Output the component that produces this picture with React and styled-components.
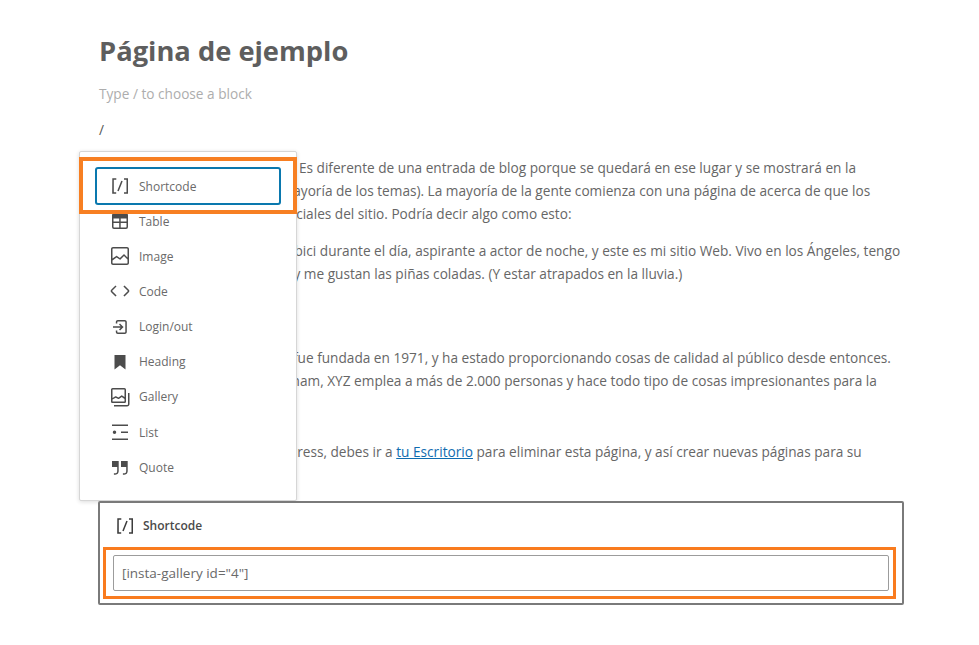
import React from "react";
import styled, { createGlobalStyle } from "styled-components";

const GlobalStyle = createGlobalStyle`
  html, body {
    margin: 0;
    background: #fff;
  }
  body {
    font-family: "Open Sans", "Liberation Sans", sans-serif;
    color: #555;
  }
`;

const Page = styled.div`
  position: relative;
  width: 979px;
  height: 645px;
  box-sizing: border-box;
  padding: 32px 76px 0 99px;
  overflow: hidden;
`;

const Title = styled.h1`
  margin: 0;
  font-size: 27.3px;
  line-height: 38px;
  font-weight: 700;
  color: #5e5e5e;
`;

const Placeholder = styled.div`
  margin-top: 14px;
  font-size: 13.65px;
  line-height: 20px;
  color: #adadad;
`;

const Slash = styled.div`
  margin-top: 15px;
  font-size: 13.65px;
  line-height: 21px;
  color: #555;
`;

const Paragraph = styled.p`
  margin: ${(props) => props.$top || 14}px 0 0;
  font-size: 13.65px;
  line-height: 23.2px;
  color: #666;
  white-space: nowrap;
  a {
    color: #0f6cb0;
  }
`;

const Menu = styled.div`
  position: absolute;
  left: 79px;
  top: 151px;
  width: 218px;
  height: 350px;
  box-sizing: border-box;
  padding: 15px;
  background: #fff;
  border: 1px solid #d6d6d6;
  border-radius: 2px;
  box-shadow: 0 1px 4px rgba(0, 0, 0, 0.14);
`;

const MenuRow = styled.div`
  display: flex;
  align-items: center;
  gap: 7px;
  height: ${(props) => (props.$selected ? "38px" : "35.15px")};
  margin-bottom: ${(props) => (props.$selected ? "-1.4px" : "0")};
  padding-left: 13px;
  border-radius: 3px;
  font-size: 12px;
  color: #6a6a6a;
  box-shadow: ${(props) => (props.$selected ? "inset 0 0 0 2px #0a78ae" : "none")};
  svg {
    flex: none;
    width: 24px;
    height: 24px;
    fill: #4c4c4c;
    fill-rule: evenodd;
  }
`;

const MenuCallout = styled.div`
  position: absolute;
  left: -1px;
  top: 5px;
  width: 218px;
  height: 57px;
  box-sizing: border-box;
  border: 4px solid #f77f22;
`;

const ShortcodeBlock = styled.div`
  position: absolute;
  left: 98px;
  top: 501px;
  width: 806px;
  height: 104px;
  box-sizing: border-box;
  border: 2px solid #7a7a7a;
  border-radius: 2px;
  background: #fff;
`;

const BlockHeader = styled.div`
  display: flex;
  align-items: center;
  gap: 6px;
  height: 44px;
  box-sizing: border-box;
  padding: 1px 0 0 13px;
  font-size: 12px;
  font-weight: 600;
  color: #4a4a4a;
  svg {
    width: 24px;
    height: 24px;
    fill: #3c3c3c;
  }
`;

const InputCallout = styled.div`
  margin: 0 6px 0 3px;
  padding: 5px 4px 5px 7px;
  border: 3px solid #f97b1e;
`;

const ShortcodeInput = styled.div`
  height: 36px;
  box-sizing: border-box;
  display: flex;
  align-items: center;
  padding-left: 8px;
  border: 1px solid #9c9c9c;
  border-radius: 2px;
  font-size: 13.5px;
  color: #6a6a6a;
`;

const ShortcodeIcon = () => (
  <svg viewBox="0 0 24 24">
    <path d="M16 4.2v1.5h2.5v12.5H16v1.5h4V4.2h-4zM4.2 19.8h4v-1.5H5.8V5.8h2.5V4.2h-4l-.1 15.6zm5.1-3.1l1.4.6 4-10-1.4-.6-4 10z" />
  </svg>
);

const menuItems = [
  {
    label: "Table",
    icon: "M6 4h12a2 2 0 012 2v12a2 2 0 01-2 2H6a2 2 0 01-2-2V6a2 2 0 012-2zm-.5 5.500v3h5.700v-3H5.500zm0 4.500V18c0 .3.2.5.5.5h5.200V14H5.500zm7.200 4.500H18c.3 0 .5-.2.5-.5v-4h-5.800v4.500zm5.800-6v-3h-5.800v3h5.800z",
  },
  {
    label: "Image",
    icon: "M19 3H5c-1.100 0-2 .9-2 2v14c0 1.100.9 2 2 2h14c1.100 0 2-.9 2-2V5c0-1.100-.9-2-2-2zM5 4.500h14c.3 0 .5.2.5.5v8.400l-3-2.900c-.3-.3-.8-.3-1 0L11.900 14 9 12c-.3-.2-.6-.2-.8 0l-3.700 2.600V5c0-.3.2-.5.5-.5zm14 15H5c-.3 0-.5-.2-.5-.5v-2.400l4.100-3 3 1.900c.3.2.7.2.9-.1L16 12l3.500 3.400V19c0 .3-.2.5-.5.5z",
  },
  {
    label: "Code",
    icon: "M20.800 10.700l-4.300-4.300-1.100 1.100 4.300 4.300c.1.1.1.3 0 .4l-4.300 4.300 1.100 1.100 4.300-4.300c.7-.8.7-1.900 0-2.600zM4.200 11.800l4.300-4.300-1-1-4.300 4.300c-.7.7-.7 1.800 0 2.500l4.300 4.300 1.100-1.100-4.300-4.300c-.2-.1-.2-.3-.1-.4z",
  },
  {
    label: "Login/out",
    icon: "M11 14.500l1.100 1.100 3-3 .5-.5-.6-.6-3-3-1 1 1.700 1.700H5v1.500h7.700L11 14.500zM16.800 5h-7c-1.100 0-2 .9-2 2v1.500h1.500V7c0-.3.2-.5.5-.5h7c.3 0 .5.2.5.5v10c0 .3-.2.5-.5.5h-7c-.3 0-.5-.2-.5-.5v-1.500H7.800V17c0 1.100.9 2 2 2h7c1.100 0 2-.9 2-2V7c0-1.100-.9-2-2-2z",
  },
  { label: "Heading", icon: "M6.500 5h11v14.500L12 15.300l-5.500 4.200V5z" },
  {
    label: "Gallery",
    icon: "M16.375 4.500H4.625a.125.125 0 0 0-.125.125v8.254l2.859-1.540a.75.75 0 0 1 .68-.016l2.384 1.142 2.890-2.074a.75.75 0 0 1 .874 0l2.313 1.660V4.625a.125.125 0 0 0-.125-.125Zm.125 9.398-2.750-1.975-2.813 2.020a.75.75 0 0 1-.76.067l-2.444-1.170L4.500 14.583v1.792c0 .069.056.125.125.125h11.750a.125.125 0 0 0 .125-.125v-2.477ZM4.625 3C3.728 3 3 3.728 3 4.625v11.750C3 17.273 3.728 18 4.625 18h11.750c.898 0 1.625-.727 1.625-1.625V4.625C18 3.728 17.273 3 16.375 3H4.625ZM20 8v11c0 .69-.31 1-.999 1H6v1.500h13.001c1.520 0 2.499-.982 2.499-2.500V8H20Z",
  },
  {
    label: "List",
    icon: "M4 4.500h16V6H4V4.500zm0 14h16V20H4v-1.500zM13 11.500h7V13h-7v-1.500zM6.500 10.500a1.500 1.500 0 110 3.500 1.500 1.500 0 010-3.500z",
  },
  {
    label: "Quote",
    icon: "M13 6v6h5.200v4c0 .8-.2 1.400-.5 1.700-.6.6-1.600.6-2.500.5h-.3v1.500h.5c1 0 2.300-.1 3.300-1 .6-.6 1-1.600 1-2.800V6H13zm-9 6h5.200v4c0 .8-.2 1.400-.5 1.700-.6.6-1.600.6-2.500.5h-.3v1.500h.5c1 0 2.300-.1 3.300-1 .6-.6 1-1.600 1-2.800V6H4v6z",
  },
];

const App = () => {
  return (
    <Page>
      <GlobalStyle />
      <Title>Página de ejemplo</Title>
      <Placeholder>Type / to choose a block</Placeholder>
      <Slash>/</Slash>
      <Paragraph $top={16}>
        Esta es una página de ejemplo. Es diferente de una entrada de blog porque se quedará en ese lugar y se mostrará en la
        <br />
        navegación de su sitio (en la mayoría de los temas). La mayoría de la gente comienza con una página de acerca de que los
        <br />
        presenta a sus visitantes potenciales del sitio. Podría decir algo como esto:
      </Paragraph>
      <Paragraph $top={13}>
        ¡Hola! Yo soy un mensajero en bici durante el día, aspirante a actor de noche, y este es mi sitio Web. Vivo en los Ángeles, tengo
        <br />
        un perro grande llamado Jack, y me gustan las piñas coladas. (Y estar atrapados en la lluvia.)
      </Paragraph>
      <Paragraph $top={25}>...o algo como esto:</Paragraph>
      <Paragraph $top={13}>
        La empresa de XYZ Doohickey fue fundada en 1971, y ha estado proporcionando cosas de calidad al público desde entonces.
        <br />
        Localizada en la ciudad de Gotham, XYZ emplea a más de 2.000 personas y hace todo tipo de cosas impresionantes para la
        <br />
        comunidad de Gotham.
      </Paragraph>
      <Paragraph $top={24}>
        Como nuevo usuario de WordPress, debes ir a <a href="#escritorio">tu Escritorio</a> para eliminar esta página, y así crear nuevas páginas para su
        <br />
        contenido. ¡Diviértete!
      </Paragraph>

      <Menu>
        <MenuRow $selected>
          <ShortcodeIcon />
          Shortcode
        </MenuRow>
        {menuItems.map((item) => (
          <MenuRow key={item.label}>
            <svg viewBox="0 0 24 24">
              <path d={item.icon} />
            </svg>
            {item.label}
          </MenuRow>
        ))}
        <MenuCallout />
      </Menu>

      <ShortcodeBlock>
        <BlockHeader>
          <ShortcodeIcon />
          Shortcode
        </BlockHeader>
        <InputCallout>
          <ShortcodeInput>[insta-gallery id="4"]</ShortcodeInput>
        </InputCallout>
      </ShortcodeBlock>
    </Page>
  );
};

export default App;
